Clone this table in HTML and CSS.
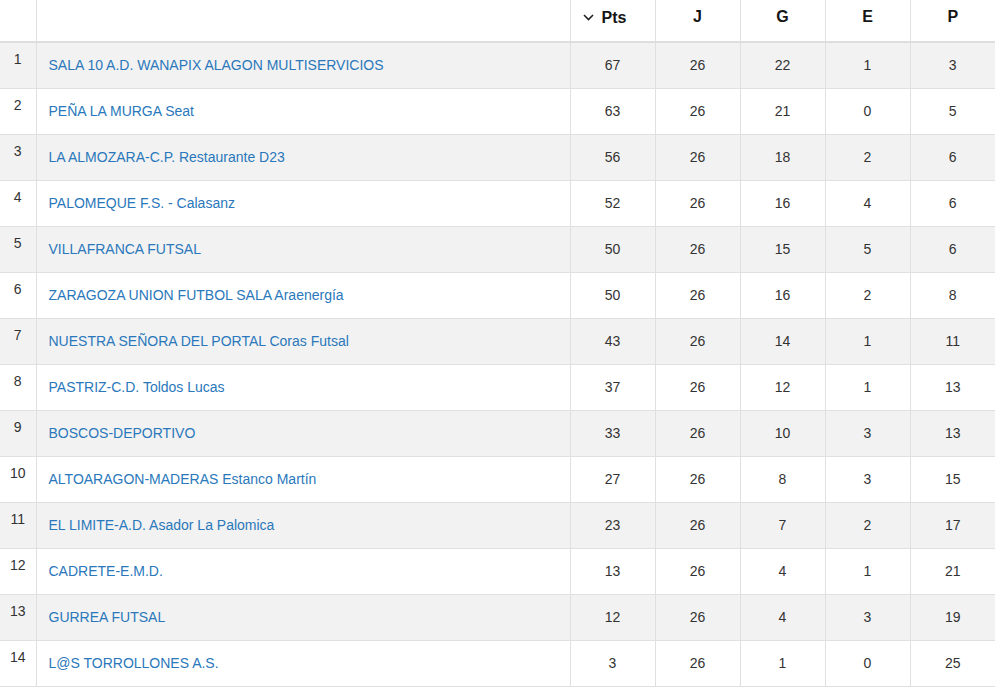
FILE: index.html
```html
<!DOCTYPE html>
<html>
<head>
<meta charset="utf-8">
<link rel="stylesheet" href="styles.css">
</head>
<body>
<table class="standings">
  <colgroup>
    <col class="w-rank">
    <col class="w-team">
    <col class="w-num">
    <col class="w-num">
    <col class="w-num">
    <col class="w-num">
    <col class="w-num">
  </colgroup>
  <thead>
    <tr>
      <th class="c-rank"></th>
      <th class="c-team"></th>
      <th class="c-num c-sorted"><span class="sort"><svg class="chev" width="11" height="7" viewBox="0 0 11 7"><path d="M1 1 L5.5 5.5 L10 1" fill="none" stroke="#222" stroke-width="1.6"/></svg>Pts</span></th>
      <th class="c-num">J</th>
      <th class="c-num">G</th>
      <th class="c-num">E</th>
      <th class="c-num">P</th>
    </tr>
  </thead>
  <tbody>
    <tr><td class="c-rank">1</td><td class="c-team"><a href="#">SALA 10 A.D. WANAPIX ALAGON MULTISERVICIOS</a></td><td class="c-num">67</td><td class="c-num">26</td><td class="c-num">22</td><td class="c-num">1</td><td class="c-num">3</td></tr>
    <tr><td class="c-rank">2</td><td class="c-team"><a href="#">PEÑA LA MURGA Seat</a></td><td class="c-num">63</td><td class="c-num">26</td><td class="c-num">21</td><td class="c-num">0</td><td class="c-num">5</td></tr>
    <tr><td class="c-rank">3</td><td class="c-team"><a href="#">LA ALMOZARA-C.P. Restaurante D23</a></td><td class="c-num">56</td><td class="c-num">26</td><td class="c-num">18</td><td class="c-num">2</td><td class="c-num">6</td></tr>
    <tr><td class="c-rank">4</td><td class="c-team"><a href="#">PALOMEQUE F.S. - Calasanz</a></td><td class="c-num">52</td><td class="c-num">26</td><td class="c-num">16</td><td class="c-num">4</td><td class="c-num">6</td></tr>
    <tr><td class="c-rank">5</td><td class="c-team"><a href="#">VILLAFRANCA FUTSAL</a></td><td class="c-num">50</td><td class="c-num">26</td><td class="c-num">15</td><td class="c-num">5</td><td class="c-num">6</td></tr>
    <tr><td class="c-rank">6</td><td class="c-team"><a href="#">ZARAGOZA UNION FUTBOL SALA Araenergía</a></td><td class="c-num">50</td><td class="c-num">26</td><td class="c-num">16</td><td class="c-num">2</td><td class="c-num">8</td></tr>
    <tr><td class="c-rank">7</td><td class="c-team"><a href="#">NUESTRA SEÑORA DEL PORTAL Coras Futsal</a></td><td class="c-num">43</td><td class="c-num">26</td><td class="c-num">14</td><td class="c-num">1</td><td class="c-num">11</td></tr>
    <tr><td class="c-rank">8</td><td class="c-team"><a href="#">PASTRIZ-C.D. Toldos Lucas</a></td><td class="c-num">37</td><td class="c-num">26</td><td class="c-num">12</td><td class="c-num">1</td><td class="c-num">13</td></tr>
    <tr><td class="c-rank">9</td><td class="c-team"><a href="#">BOSCOS-DEPORTIVO</a></td><td class="c-num">33</td><td class="c-num">26</td><td class="c-num">10</td><td class="c-num">3</td><td class="c-num">13</td></tr>
    <tr><td class="c-rank">10</td><td class="c-team"><a href="#">ALTOARAGON-MADERAS Estanco Martín</a></td><td class="c-num">27</td><td class="c-num">26</td><td class="c-num">8</td><td class="c-num">3</td><td class="c-num">15</td></tr>
    <tr><td class="c-rank">11</td><td class="c-team"><a href="#">EL LIMITE-A.D. Asador La Palomica</a></td><td class="c-num">23</td><td class="c-num">26</td><td class="c-num">7</td><td class="c-num">2</td><td class="c-num">17</td></tr>
    <tr><td class="c-rank">12</td><td class="c-team"><a href="#">CADRETE-E.M.D.</a></td><td class="c-num">13</td><td class="c-num">26</td><td class="c-num">4</td><td class="c-num">1</td><td class="c-num">21</td></tr>
    <tr><td class="c-rank">13</td><td class="c-team"><a href="#">GURREA FUTSAL</a></td><td class="c-num">12</td><td class="c-num">26</td><td class="c-num">4</td><td class="c-num">3</td><td class="c-num">19</td></tr>
    <tr><td class="c-rank">14</td><td class="c-team"><a href="#">L@S TORROLLONES A.S.</a></td><td class="c-num">3</td><td class="c-num">26</td><td class="c-num">1</td><td class="c-num">0</td><td class="c-num">25</td></tr>
  </tbody>
</table>
</body>
</html>
```
FILE: styles.css
```css
html, body {
  margin: 0;
  padding: 0;
  background: #fff;
}
body {
  font-family: "Liberation Sans", Arial, sans-serif;
  font-size: 14px;
  color: #333;
}
.standings {
  width: 995px;
  border-collapse: collapse;
  table-layout: fixed;
}
.w-rank { width: 36px; }
.w-team { width: 534px; }
.w-num { width: 85px; }
.standings th,
.standings td {
  border-left: 1px solid #e0e0e0;
  padding: 0;
  box-sizing: border-box;
}
.standings th:first-child,
.standings td:first-child {
  border-left: none;
}
.standings thead th {
  height: 42px;
  padding-top: 1px;
  padding-bottom: 8px;
  border-bottom: 2px solid #dedede;
  font-size: 16px;
  font-weight: bold;
  color: #151515;
  text-align: center;
  vertical-align: middle;
}
.standings tbody td {
  height: 46px;
  border-bottom: 1px solid #e0e0e0;
  vertical-align: middle;
}
.standings tbody tr:nth-child(odd) {
  background: #f2f2f2;
}
.c-rank {
  text-align: center;
}
.standings tbody td.c-rank {
  vertical-align: top;
  padding-top: 8px;
  line-height: 16px;
}
.c-team {
  text-align: left;
}
.standings tbody td.c-team {
  padding-left: 12px;
}
.c-team a {
  color: #2a78bb;
  text-decoration: none;
}
.c-num {
  text-align: center;
}
.standings thead th.c-sorted {
  padding-right: 16px;
}
.sort {
  display: inline-flex;
  align-items: center;
  gap: 8px;
}
.chev {
  display: block;
}
```
